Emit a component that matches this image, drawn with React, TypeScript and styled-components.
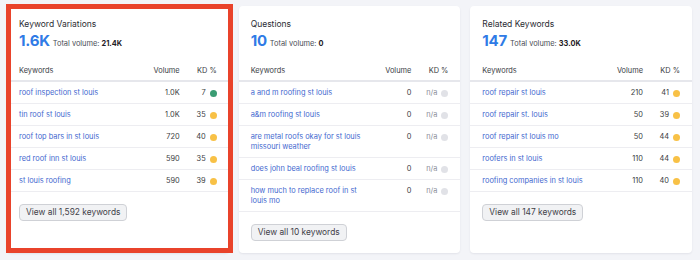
import React from "react";
import styled, { createGlobalStyle } from "styled-components";

const GlobalStyle = createGlobalStyle`
  html, body { margin: 0; padding: 0; }
  body {
    background: #f3f4f8;
    font-family: Inter, "Noto Sans", Arial, sans-serif;
    color: #333;
    -webkit-font-smoothing: antialiased;
  }
`;

const Page = styled.div`
  display: grid;
  grid-template-columns: repeat(3, 1fr);
  gap: 10px;
  padding: 6px 8px 7px 7px;
  width: 700px;
  height: 260px;
  box-sizing: border-box;
`;

const Card = styled.div<{ $highlight?: boolean }>`
  position: relative;
  background: #fff;
  border-radius: 4px;
  box-shadow: 0 1px 2px rgba(20, 30, 60, 0.08);
  display: flex;
  flex-direction: column;
  ${(p) =>
    p.$highlight &&
    `
    &::after {
      content: "";
      position: absolute;
      left: -1px;
      right: -4px;
      top: -2px;
      bottom: 0;
      border: 5px solid #e9432b;
      pointer-events: none;
    }
  `}
`;

const Head = styled.div`
  padding: 12px 12px 0 12px;
`;

const Title = styled.div`
  font-size: 8.5px;
  line-height: 12px;
  color: #2b2d33;
`;

const Summary = styled.div`
  display: flex;
  align-items: baseline;
  gap: 3px;
  margin-top: 2px;
  height: 18px;
`;

const BigNum = styled.span`
  font-size: 15px;
  line-height: 18px;
  font-weight: 700;
  color: #2f7be6;
  letter-spacing: -0.2px;
`;

const Total = styled.span`
  font-size: 7.4px;
  color: #4a4d55;
  b {
    font-weight: 700;
    color: #1f2126;
  }
`;

const Table = styled.div`
  margin-top: 12px;
`;

const Row = styled.div<{ $header?: boolean }>`
  display: grid;
  grid-template-columns: 1fr 46px 37px;
  align-items: start;
  padding: ${(p) => (p.$header ? "4px 12px 4px 12px" : "6px 12px 5px 12px")};
  border-bottom: ${(p) => (p.$header ? "2px solid #e6e7ec" : "1px solid #ededf1")};
  font-size: 7.4px;
  line-height: 10px;
  color: ${(p) => (p.$header ? "#3b3e46" : "#3a3c42")};
`;

const Keyword = styled.a`
  color: #4469cf;
  text-decoration: none;
`;

const Num = styled.span`
  text-align: right;
`;

const Kd = styled.span<{ $na?: boolean }>`
  display: flex;
  justify-content: flex-end;
  align-items: center;
  gap: 4px;
  color: ${(p) => (p.$na ? "#8b8e98" : "#3a3c42")};
`;

const Dot = styled.span<{ $color: string }>`
  width: 7px;
  height: 7px;
  border-radius: 50%;
  background: ${(p) => p.$color};
  flex: none;
`;

const Footer = styled.div`
  display: flex;
  padding: 12px 12px 0 12px;
`;

const Button = styled.button`
  font-family: inherit;
  font-size: 8.4px;
  line-height: 15px;
  height: 17px;
  padding: 0 6px;
  color: #3f4148;
  background: #f1f2f4;
  border: 1px solid #cfd1d6;
  border-radius: 4px;
  cursor: pointer;
`;

type Item = { kw: string; vol: string; kd: string };

const dotColor = (kd: string) => {
  if (kd === "n/a") return "#e1e2e7";
  const n = parseInt(kd, 10);
  if (n < 15) return "#3a9c73";
  return "#f8c146";
};

const cards: {
  title: string;
  big: string;
  total: string;
  items: Item[];
  button: string;
  highlight?: boolean;
}[] = [
  {
    title: "Keyword Variations",
    big: "1.6K",
    total: "21.4K",
    highlight: true,
    button: "View all 1,592 keywords",
    items: [
      { kw: "roof inspection st louis", vol: "1.0K", kd: "7" },
      { kw: "tin roof st louis", vol: "1.0K", kd: "35" },
      { kw: "roof top bars in st louis", vol: "720", kd: "40" },
      { kw: "red roof inn st louis", vol: "590", kd: "35" },
      { kw: "st louis roofing", vol: "590", kd: "39" },
    ],
  },
  {
    title: "Questions",
    big: "10",
    total: "0",
    button: "View all 10 keywords",
    items: [
      { kw: "a and m roofing st louis", vol: "0", kd: "n/a" },
      { kw: "a&m roofing st louis", vol: "0", kd: "n/a" },
      { kw: "are metal roofs okay for st louis missouri weather", vol: "0", kd: "n/a" },
      { kw: "does john beal roofing st louis", vol: "0", kd: "n/a" },
      { kw: "how much to replace roof in st louis mo", vol: "0", kd: "n/a" },
    ],
  },
  {
    title: "Related Keywords",
    big: "147",
    total: "33.0K",
    button: "View all 147 keywords",
    items: [
      { kw: "roof repair st louis", vol: "210", kd: "41" },
      { kw: "roof repair st. louis", vol: "50", kd: "39" },
      { kw: "roof repair st louis mo", vol: "50", kd: "44" },
      { kw: "roofers in st louis", vol: "110", kd: "44" },
      { kw: "roofing companies in st louis", vol: "110", kd: "40" },
    ],
  },
];

export default function App() {
  return (
    <>
      <GlobalStyle />
      <Page>
        {cards.map((c) => (
          <Card key={c.title} $highlight={c.highlight}>
            <Head>
              <Title>{c.title}</Title>
              <Summary>
                <BigNum>{c.big}</BigNum>
                <Total>
                  Total volume: <b>{c.total}</b>
                </Total>
              </Summary>
            </Head>
            <Table>
              <Row $header>
                <span>Keywords</span>
                <Num>Volume</Num>
                <Kd>KD %</Kd>
              </Row>
              {c.items.map((it) => (
                <Row key={it.kw}>
                  <Keyword href="#">{it.kw}</Keyword>
                  <Num>{it.vol}</Num>
                  <Kd $na={it.kd === "n/a"}>
                    {it.kd}
                    <Dot $color={dotColor(it.kd)} />
                  </Kd>
                </Row>
              ))}
            </Table>
            <Footer>
              <Button>{c.button}</Button>
            </Footer>
          </Card>
        ))}
      </Page>
    </>
  );
}
